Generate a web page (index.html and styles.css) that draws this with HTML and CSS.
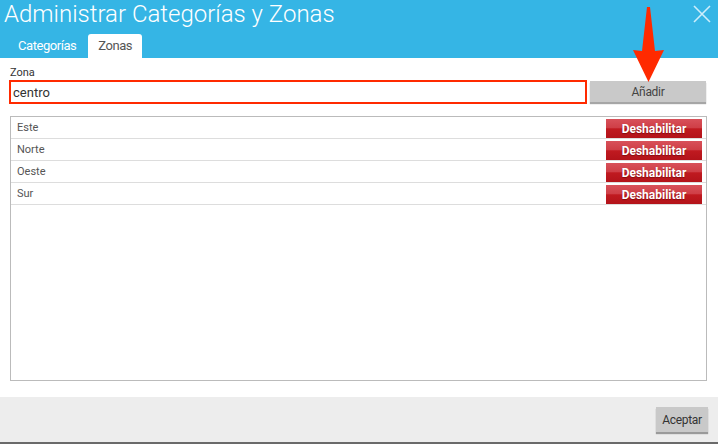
FILE: index.html
```html
<!DOCTYPE html>
<html lang="es">

<head>
  <meta charset="UTF-8" />
  <title>Administrar Categorías y Zonas</title>
  <meta name="viewport" content="width=device-width, initial-scale=1.0" />
  <link rel="stylesheet" href="styles.css">
</head>

<body>

  <div class="dialog">
    <div class="dialog-header">
      <div class="title-row">
        <h1>Administrar Categorías y Zonas</h1>
        <button class="close" aria-label="Cerrar">
          <svg width="18" height="18" viewBox="0 0 18 18">
            <path d="M1 1 L17 17 M17 1 L1 17" stroke="#cdeefb" stroke-width="1.6" fill="none" />
          </svg>
        </button>
      </div>
      <div class="tabs">
        <div class="tab">Categorías</div>
        <div class="tab active">Zonas</div>
      </div>
    </div>

    <div class="dialog-body">
      <label for="zona">Zona</label>
      <div class="add-row">
        <input type="text" id="zona" value="centro" />
        <button class="btn-gray">Añadir</button>
      </div>

      <div class="zone-list">
        <div class="zone-row">
          <span>Este</span>
          <button class="btn-red">Deshabilitar</button>
        </div>
        <div class="zone-row">
          <span>Norte</span>
          <button class="btn-red">Deshabilitar</button>
        </div>
        <div class="zone-row">
          <span>Oeste</span>
          <button class="btn-red">Deshabilitar</button>
        </div>
        <div class="zone-row">
          <span>Sur</span>
          <button class="btn-red">Deshabilitar</button>
        </div>
      </div>
    </div>

    <div class="dialog-footer">
      <button class="btn-gray accept">Aceptar</button>
    </div>
  </div>

  <!-- annotation arrow pointing at the add button -->
  <svg class="arrow" width="40" height="90" viewBox="0 0 40 90">
    <path d="M15 7 L18 7 L23 51 L32 50 L16.5 82 L1 50 L10 51 Z" fill="#ff2a00" />
  </svg>

</body>

</html>
```

FILE: styles.css
```css
* {
  box-sizing: border-box;
}

body {
  margin: 0;
  padding: 0;
  font-family: Roboto, "Liberation Sans", sans-serif;
  background-color: #fff;
  color: #333;
  width: 718px;
  height: 444px;
  position: relative;
  overflow: hidden;
}

.dialog {
  display: flex;
  flex-direction: column;
  height: 444px;
}

.dialog-header {
  background-color: #35b5e5;
  height: 58px;
  padding-left: 4px;
}

.title-row {
  display: flex;
  justify-content: space-between;
  align-items: flex-start;
}

h1 {
  margin: 0;
  font-size: 24px;
  font-weight: 300;
  line-height: 28px;
  color: #fff;
}

.close {
  background: none;
  border: none;
  padding: 0;
  margin: 5px 7px 0 0;
  width: 18px;
  height: 18px;
  cursor: pointer;
}

.close svg {
  display: block;
}

.tabs {
  display: flex;
  gap: 2px;
  margin-top: 6px;
  padding-left: 4px;
}

.tab {
  height: 24px;
  line-height: 24px;
  padding: 0 10px;
  font-size: 13px;
  letter-spacing: -0.45px;
  color: #fff;
  border-radius: 3px 3px 0 0;
}

.tab.active {
  background-color: #fff;
  color: #555;
}

.dialog-body {
  flex: 1;
  display: flex;
  flex-direction: column;
  padding: 8px 11px 16px 9px;
}

label {
  display: block;
  font-size: 11px;
  line-height: 13px;
  color: #333;
  padding-left: 1px;
  margin-bottom: 1px;
}

.add-row {
  display: flex;
  align-items: flex-start;
  gap: 3px;
  margin-bottom: 12px;
}

.add-row input {
  flex: 1;
  height: 24px;
  border: 2px solid #ff2a00;
  padding: 0 2px;
  font-family: inherit;
  font-size: 13px;
  color: #333;
  outline: none;
}

.btn-gray {
  background-color: #c9c9c9;
  border: none;
  font-family: inherit;
  font-size: 12px;
  letter-spacing: -0.3px;
  color: #444;
  cursor: pointer;
  box-shadow: 0 2px 1px rgba(0, 0, 0, 0.35);
}

.add-row .btn-gray {
  width: 116px;
  height: 21px;
  margin-top: 1px;
  margin-right: 1px;
}

.zone-list {
  flex: 1;
  margin-left: 1px;
  border: 1px solid #bbb;
}

.zone-row {
  display: flex;
  justify-content: space-between;
  align-items: flex-start;
  height: 22px;
  border-bottom: 1px solid #ddd;
  padding: 0 4px 0 6px;
  font-size: 11px;
  line-height: 21px;
  color: #555;
}

.btn-red {
  margin-top: 2px;
  width: 96px;
  height: 19px;
  border: none;
  padding: 0;
  font-family: inherit;
  font-size: 12px;
  font-weight: 700;
  color: #fff;
  text-shadow: 0 1px 1px rgba(80, 0, 0, 0.5);
  background: linear-gradient(#d8515a 0%, #cf3f47 45%, #c01a20 52%, #b3131a 100%);
  cursor: pointer;
}

.dialog-footer {
  height: 47px;
  background-color: #ededed;
  border-bottom: 2px solid #6a6a6a;
  display: flex;
  justify-content: flex-end;
  align-items: flex-start;
  padding: 10px 10px 0 0;
}

.accept {
  width: 52px;
  height: 25px;
  color: #333;
}

.arrow {
  position: absolute;
  left: 632px;
  top: 0;
}
```
